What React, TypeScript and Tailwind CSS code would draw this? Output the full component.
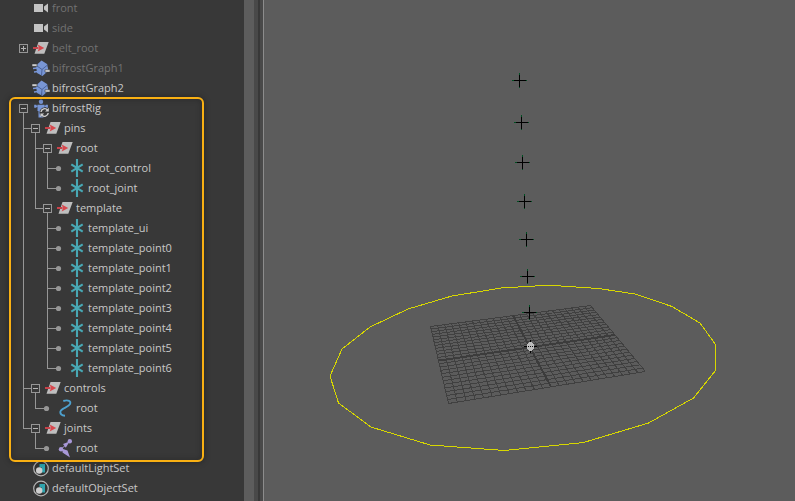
import React from "react";

type IconName = "camera" | "transform" | "graph" | "rig" | "locator" | "curve" | "joint" | "set";
type Guide = "line" | "tee" | "elbow" | "blank";
type Marker = "open" | "closed" | "leaf" | "none";

interface Item {
  label: string;
  icon: IconName;
  marker: Marker;
  guides?: Guide[];
  muted?: boolean;
}

const sceneItems: Item[] = [
  { label: "front", icon: "camera", marker: "none", muted: true },
  { label: "side", icon: "camera", marker: "none", muted: true },
  { label: "belt_root", icon: "transform", marker: "closed", muted: true },
  { label: "bifrostGraph1", icon: "graph", marker: "none", muted: true },
  { label: "bifrostGraph2", icon: "graph", marker: "none" },
];

const templatePoints: Item[] = ["ui", "point0", "point1", "point2", "point3", "point4", "point5", "point6"].map(
  (name, i, all) => ({
    label: `template_${name}`,
    icon: "locator",
    marker: "leaf",
    guides: ["line", "blank", i === all.length - 1 ? "elbow" : "tee"],
  }),
);

const rigItems: Item[] = [
  { label: "bifrostRig", icon: "rig", marker: "open" },
  { label: "pins", icon: "transform", marker: "open", guides: ["tee"] },
  { label: "root", icon: "transform", marker: "open", guides: ["line", "tee"] },
  { label: "root_control", icon: "locator", marker: "leaf", guides: ["line", "line", "tee"] },
  { label: "root_joint", icon: "locator", marker: "leaf", guides: ["line", "line", "elbow"] },
  { label: "template", icon: "transform", marker: "open", guides: ["line", "elbow"] },
  ...templatePoints,
  { label: "controls", icon: "transform", marker: "open", guides: ["tee"] },
  { label: "root", icon: "curve", marker: "leaf", guides: ["line", "elbow"] },
  { label: "joints", icon: "transform", marker: "open", guides: ["elbow"] },
  { label: "root", icon: "joint", marker: "leaf", guides: ["blank", "elbow"] },
];

const setItems: Item[] = [
  { label: "defaultLightSet", icon: "set", marker: "none" },
  { label: "defaultObjectSet", icon: "set", marker: "none" },
];

function GuideCell({ kind }: { kind: Guide }) {
  const path = { line: "M6 0h1v20h-1z", tee: "M6 0h1v20h-1zM6 10h6v1h-6z", elbow: "M6 0h1v11h-1zM6 10h6v1h-6z", blank: "" }[kind];
  return (
    <svg className="h-5 w-3 shrink-0" viewBox="0 0 12 20" fill="#969696" shapeRendering="crispEdges" aria-hidden="true">
      <path d={path} />
    </svg>
  );
}

function MarkerCell({ marker, nested, label }: { marker: Marker; nested: boolean; label: string }) {
  if (marker === "none") return <span className="w-3 shrink-0" />;
  if (marker === "leaf")
    return (
      <svg className="h-5 w-3 shrink-0" viewBox="0 0 12 20" fill="#969696" aria-hidden="true">
        <path d="M0 10h4v1h-4z" />
        <circle cx="5.5" cy="10.5" r="2.6" />
      </svg>
    );
  return (
    <button type="button" className="h-5 w-3 shrink-0" aria-label={`${marker === "open" ? "Collapse" : "Expand"} ${label}`}>
      <svg className="h-5 w-3" viewBox="0 0 12 20" fill="#969696" shapeRendering="crispEdges" aria-hidden="true">
        {nested && <path d="M0 10h2v1h-2z" />}
        <path fillRule="evenodd" d="M2 6h9v9h-9zM3 7v7h7v-7z" />
        <path d="M4 10h5v1h-5z" fill="#b4b4b4" />
        {marker === "closed" ? <path d="M6 8h1v5h-1z" fill="#b4b4b4" /> : <path d="M6 15h1v5h-1z" />}
      </svg>
    </button>
  );
}

const drawings: Record<IconName, React.ReactNode> = {
  camera: (
    <g fill="#c3c3c3">
      <rect x="1" y="4" width="9" height="8" />
      <path d="M15 3.500v9l-4-3v-3z" />
    </g>
  ),
  transform: (
    <>
      <path d="M5.500 2h10.200l-4.400 11.700H1.500z" fill="#bebebe" />
      <path d="M0 7h5.500v2H0z" fill="#c8434a" />
      <path d="M4.700 4.500L11.200 8l-6.500 3.500L6 8z" fill="#d8464c" />
    </>
  ),
  graph: (
    <>
      <path d="M8.500.5L14 4l1.500 6.500L9.500 16 4 13 3 5.500z" fill="#7896d6" />
      <path d="M0 8.500L4 8M1 12l4-.5" fill="none" stroke="#7896d6" strokeWidth="1.300" />
      <path d="M4 6l5 3.500L14.500 5M9 9.500L8.500 15.500" fill="none" stroke="#4c6499" strokeWidth="1" />
      <path d="M-1 4h5v2.300h-5zM12 9.800h5v2.300h-5z" fill="#e2e2e2" stroke="#383838" strokeWidth=".6" />
    </>
  ),
  rig: (
    <>
      <g fill="#7896d6">
        <circle cx="8" cy="1.800" r="2.200" />
        <path d="M4.500 4.700h7v6.300h-1v6.500H5.500V11h-1z" />
        <path d="M1.200 4.700h2.200v3H1.200zM12.700 4.700h2.200v3h-2.200zM3.400 5.500h1.200v1.500H3.400zM11.400 5.500h1.500v1.500h-1.500z" />
      </g>
      <circle cx="11.500" cy="12.500" r="5" fill="#383838" />
      <path d="M8 12a3.700 3.700 0 0 1 6.500-2M15.200 13a3.700 3.700 0 0 1-6.500 2" fill="none" stroke="#cdcdcd" strokeWidth="1.400" />
      <path d="M15.800 7.800v3.700h-3.700zM7.400 17.200v-3.700h3.700z" fill="#cdcdcd" />
    </>
  ),
  locator: <path d="M8 -1v18M2.300 4.300l11.400 7.400M13.700 4.300L2.300 11.700" fill="none" stroke="#48a8b4" strokeWidth="2.100" />,
  curve: <path d="M6.300 1C11-.5 14.500 1 13 4.200 11.500 7.500 3.500 8 3.300 12c0 2 2 3.500 4.700 3.700" fill="none" stroke="#4da0ce" strokeWidth="1.900" />,
  joint: (
    <g fill="#a898d8">
      <circle cx="4" cy="9.200" r="2.200" />
      <circle cx="12.800" cy="1.200" r="2.200" />
      <path d="M12.500 1.500L6 4l2.800 3.800zM6 9l-.5 3.500 7.500 5-2.500-7z" />
      <path d="M4 9.200l4-3.500M4 9.200l5 5" stroke="#a898d8" strokeWidth="1" />
    </g>
  ),
  set: (
    <>
      <circle cx="8" cy="8.500" r="7.300" fill="#333" stroke="#b4b4b4" strokeWidth="1.200" />
      <path d="M6.500 4H12v8.500H9V7.500H6.500z" fill="#2fa3ad" />
      <circle cx="6.200" cy="10.500" r="3.200" fill="#cfcfcf" />
    </>
  ),
};

function Row({ item }: { item: Item }) {
  const guides = item.guides ?? [];
  return (
    <li
      role="treeitem"
      aria-level={guides.length + 1}
      className={`flex h-5 items-center pl-[17px] ${item.muted ? "text-[#727272]" : "text-[#c8c8c8]"}`}
    >
      {guides.map((kind, i) => (
        <GuideCell key={i} kind={kind} />
      ))}
      <MarkerCell marker={item.marker} nested={guides.length > 0} label={item.label} />
      <svg className="ml-1 size-4 shrink-0 overflow-visible" viewBox="0 0 16 16" aria-hidden="true">
        {drawings[item.icon]}
      </svg>
      <span className="ml-[3px] whitespace-nowrap">{item.label}</span>
    </li>
  );
}

function Outliner() {
  return (
    <nav aria-label="Outliner" className="w-[244px] shrink-0 overflow-hidden bg-[#383838]">
      <ul role="tree" className="-mt-0.5 font-['Open_Sans',sans-serif] text-[11px] leading-5">
        {sceneItems.map((item) => (
          <Row key={item.label} item={item} />
        ))}
        <li role="none" className="relative">
          <ul role="group">
            {rigItems.map((item, i) => (
              <Row key={i} item={item} />
            ))}
          </ul>
          <div className="pointer-events-none absolute -top-px -bottom-1 left-[9px] w-[195px] rounded-md border-2 border-[#f9b013] shadow-[0_0_6px_rgba(0,0,0,0.35),inset_0_0_6px_rgba(0,0,0,0.25)]" />
        </li>
        {setItems.map((item) => (
          <Row key={item.label} item={item} />
        ))}
      </ul>
    </nav>
  );
}

type Point = [number, number];

// Ground plane corners on screen: back-left, back-right, front-right, front-left.
const corners: [Point, Point, Point, Point] = [
  [430.5, 326.5],
  [590.5, 305.5],
  [645.5, 371.5],
  [448.5, 403.5],
];

// Perspective mapping of the unit square onto the four corners.
function project(u: number, v: number): Point {
  const [[x0, y0], [x1, y1], [x2, y2], [x3, y3]] = corners;
  const dx1 = x1 - x2, dx2 = x3 - x2, sx = x0 - x1 + x2 - x3;
  const dy1 = y1 - y2, dy2 = y3 - y2, sy = y0 - y1 + y2 - y3;
  const det = dx1 * dy2 - dx2 * dy1;
  const g = (sx * dy2 - dx2 * sy) / det;
  const h = (dx1 * sy - sx * dy1) / det;
  const w = g * u + h * v + 1;
  return [
    ((x1 - x0 + g * x1) * u + (x3 - x0 + h * x3) * v + x0) / w,
    ((y1 - y0 + g * y1) * u + (y3 - y0 + h * y3) * v + y0) / w,
  ];
}

const segment = (a: Point, b: Point) => `M${a.join(" ")}L${b.join(" ")}`;
const divisions = 24;
const gridPath = Array.from({ length: divisions + 1 }, (_, i) => i / divisions)
  .map((t) => segment(project(t, 0), project(t, 1)) + segment(project(0, t), project(1, t)))
  .join("");
const axisPath = segment(project(0.5, 0), project(0.5, 1)) + segment(project(0, 0.5), project(1, 0.5));

const locators: Point[] = [[519, 80], [521, 122], [522, 162], [524, 201], [526, 239], [527, 276], [529, 312]];

function Viewport() {
  return (
    <main className="min-w-0 flex-1 border-l border-[#8c8c8c] bg-[#5c5c5c]">
      <svg className="h-full w-full" viewBox="264 0 531 501" fill="none" shapeRendering="crispEdges" role="img" aria-label="Perspective view">
        <path d={gridPath} stroke="#404040" />
        <path d={axisPath} stroke="#3c3c3c" strokeWidth="2" />
        <path
          d="M543.500 285.500L501.500 288L452 296L408 309L370 327L342 349L330 376L338.500 403L371 427L430 445L504.500 450.500L583.500 442.500L648.500 423L693.500 398L715.500 370.500V344.500L700 323L672 306.500L635 294L598.500 288.500L553.500 285.500Z"
          stroke="#d7d700"
        />
        {locators.map(([x, y]) => (
          <g key={y}>
            <path d={`M${x - 7} ${y + 0.5}h15M${x + 0.5} ${y - 7}v15`} stroke="#004f22" />
            <path d={`M${x - 5} ${y + 0.5}h12M${x + 0.5} ${y - 5}v12`} stroke="#000" />
          </g>
        ))}
        <path d="M524 346.500h13M530.500 340v13" stroke="#000" />
        <path d="M529 342h3v1h1v1h1v5h-1v1h-1v1h-3v-1h-1v-1h-1v-5h1v-1h1z" fill="#bcbcbc" />
        <path d="M528 346h1v1h-1zM530 346h1v1h-1zM532 346h1v1h-1z" fill="#111" />
      </svg>
    </main>
  );
}

export default function App() {
  return (
    <div className="flex h-screen overflow-hidden bg-[#494949]">
      <Outliner />
      <div className="w-2.5 shrink-0 bg-[#5d5d5d]" />
      <div className="mr-[3px] ml-1 w-0.5 shrink-0 bg-[#383838]" />
      <Viewport />
    </div>
  );
}
